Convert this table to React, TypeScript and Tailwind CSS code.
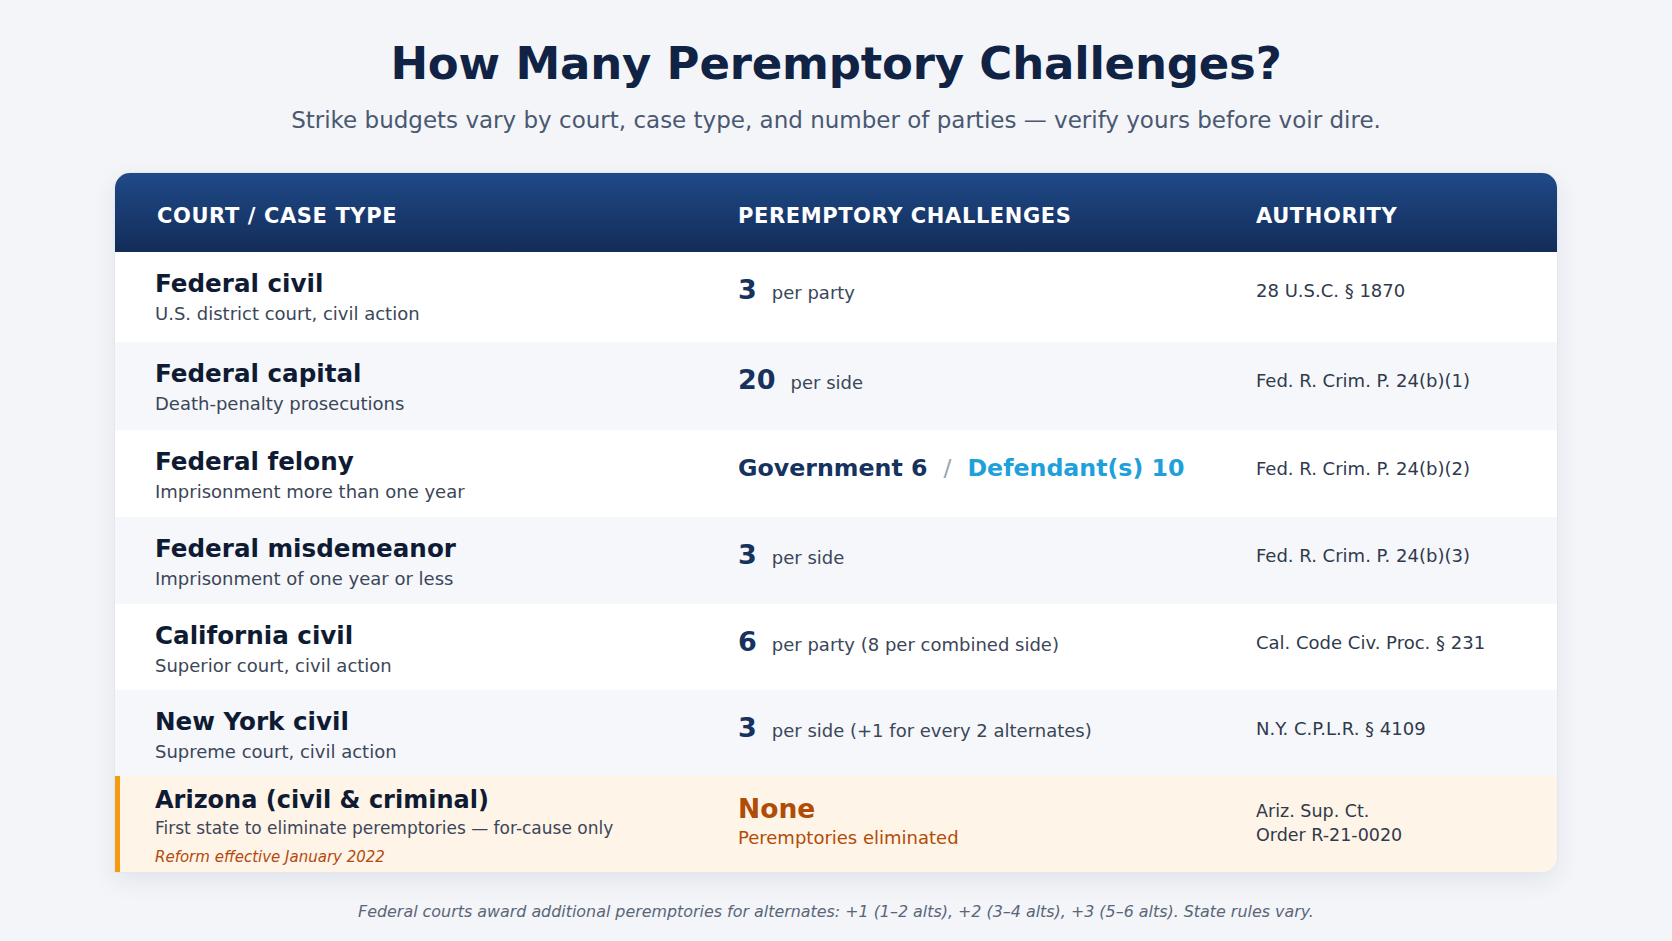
import React from 'react';

interface Row {
  court: string;
  detail: string;
  count?: string;
  unit?: string;
  authority: string;
  alt: boolean;
  h: string;
}

const rows: Row[] = [
  { court: 'Federal civil', detail: 'U.S. district court, civil action', count: '3', unit: 'per party', authority: '28 U.S.C. § 1870', alt: false, h: 'h-[90px]' },
  { court: 'Federal capital', detail: 'Death-penalty prosecutions', count: '20', unit: 'per side', authority: 'Fed. R. Crim. P. 24(b)(1)', alt: true, h: 'h-[88px]' },
  { court: 'Federal felony', detail: 'Imprisonment more than one year', authority: 'Fed. R. Crim. P. 24(b)(2)', alt: false, h: 'h-[87px]' },
  { court: 'Federal misdemeanor', detail: 'Imprisonment of one year or less', count: '3', unit: 'per side', authority: 'Fed. R. Crim. P. 24(b)(3)', alt: true, h: 'h-[87px]' },
  { court: 'California civil', detail: 'Superior court, civil action', count: '6', unit: 'per party (8 per combined side)', authority: 'Cal. Code Civ. Proc. § 231', alt: false, h: 'h-[86px]' },
  { court: 'New York civil', detail: 'Supreme court, civil action', count: '3', unit: 'per side (+1 for every 2 alternates)', authority: 'N.Y. C.P.L.R. § 4109', alt: true, h: 'h-[86px]' },
];

const cols = 'grid grid-cols-[582px_518px_1fr]';

export default function App() {
  return (
    <div className="min-h-[941px] w-full bg-[#f3f5f9] flex flex-col items-center pt-[36px]" style={{ fontFamily: '"DejaVu Sans", "Noto Sans", sans-serif' }}>
      <h1 className="text-[45px] leading-[56px] font-bold text-[#102345] tracking-[-0.2px]">How Many Peremptory Challenges?</h1>
      <p className="mt-[13px] text-[23px] leading-[30px] text-[#4a5870]">
        Strike budgets vary by court, case type, and number of parties — verify yours before voir dire.
      </p>

      <div className="mt-[37px] w-[1444px] rounded-[16px] rounded-bl-none overflow-hidden bg-white border border-[#e3e8ef] shadow-[0_8px_24px_rgba(15,35,70,0.08)]">
        <div className={`${cols} h-[79px] pt-[9px] items-center bg-gradient-to-b from-[#1f4a89] to-[#132c58] text-white text-[21px] font-bold tracking-[0.6px]`}>
          <div className="pl-[42px]">COURT / CASE TYPE</div>
          <div className="pl-[41px]">PEREMPTORY CHALLENGES</div>
          <div className="pl-[41px]">AUTHORITY</div>
        </div>

        {rows.map((r) => (
          <div key={r.court} className={`${cols} ${r.h} ${r.alt ? 'bg-[#f5f7fb]' : 'bg-white'}`}>
            <div className="pl-[40px] pt-[16px]">
              <div className="text-[24.6px] leading-[32px] font-bold text-[#0f1b33]">{r.court}</div>
              <div className="text-[18px] leading-[28px] text-[#3b4658]">{r.detail}</div>
            </div>
            <div className="pl-[41px] pt-[20px]">
              {r.count ? (
                <div className="flex items-baseline">
                  <span className="text-[27px] leading-[36px] font-bold text-[#16325f]">{r.count}</span>
                  <span className="ml-[15px] text-[18px] text-[#3b4658]">{r.unit}</span>
                </div>
              ) : (
                <div className="flex items-baseline text-[23.7px] leading-[36px] font-bold">
                  <span className="text-[#16325f]">Government 6</span>
                  <span className="mx-[16px] font-normal text-[#9aa5b5]">/</span>
                  <span className="text-[#1ea0da]">Defendant(s) 10</span>
                </div>
              )}
            </div>
            <div className="pl-[41px] pt-[26px] text-[18px] leading-[26px] text-[#2f3a4c]">{r.authority}</div>
          </div>
        ))}

        <div className="grid grid-cols-[577px_518px_1fr] h-[96px] bg-[#fff4e8] border-l-[5px] border-[#f39c12]">
          <div className="pl-[35px] pt-[9px]">
            <div className="text-[24px] leading-[30px] font-bold text-[#0f1b33]">Arizona (civil &amp; criminal)</div>
            <div className="text-[17px] leading-[26px] text-[#3b4658]">First state to eliminate peremptories — for-cause only</div>
            <div className="mt-[5px] text-[15px] leading-[22px] italic text-[#b34a0c]">Reform effective January 2022</div>
          </div>
          <div className="pl-[41px] pt-[16px]">
            <div className="text-[26.5px] leading-[34px] font-bold text-[#b14c07]">None</div>
            <div className="text-[18px] leading-[24px] text-[#b14c07]">Peremptories eliminated</div>
          </div>
          <div className="pl-[41px] pt-[23px] text-[17.5px] leading-[24px] text-[#2f3a4c]">
            <div>Ariz. Sup. Ct.</div>
            <div>Order R-21-0020</div>
          </div>
        </div>
      </div>

      <p className="mt-[27px] text-[15.9px] italic text-[#5a6678]">
        Federal courts award additional peremptories for alternates: +1 (1–2 alts), +2 (3–4 alts), +3 (5–6 alts). State rules vary.
      </p>
    </div>
  );
}
